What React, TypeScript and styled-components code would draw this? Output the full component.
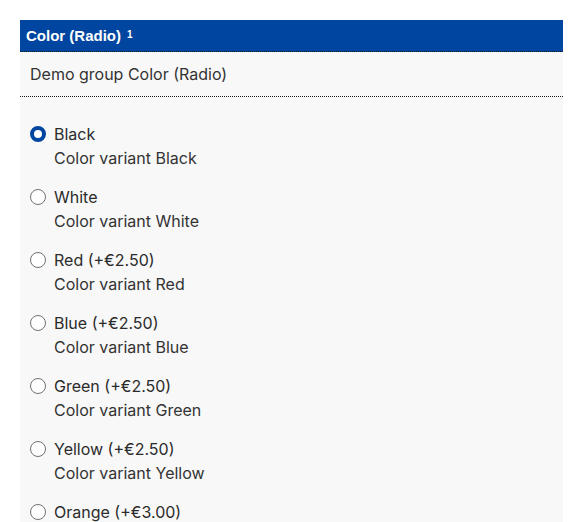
import React from "react";
import styled, { createGlobalStyle } from "styled-components";

const Global = createGlobalStyle`
  html, body { margin: 0; padding: 0; background: #ffffff; }
  body { font-family: Inter, "Noto Sans", sans-serif; color: #2b2b2b; }
  * { box-sizing: border-box; }
`;

const Page = styled.div`
  padding: 20px 20px 0 20px;
  width: 583px;
`;

const Group = styled.section`
  width: 543px;
  display: flex;
  flex-direction: column;
`;

const Header = styled.div`
  background: #0046a0;
  color: #ffffff;
  height: 32px;
  padding: 0 6px;
  display: flex;
  align-items: center;
  font-family: "Liberation Sans", Arial, sans-serif;
  font-weight: 700;
  font-size: 15px;
  border-bottom: 1px dotted #1a1a1a;
`;

const Sup = styled.sup`
  font-size: 10px;
  margin-left: 6px;
  position: relative;
  top: -1px;
`;

const Description = styled.div`
  background: #f8f8f8;
  height: 45px;
  padding: 0 10px;
  display: flex;
  align-items: center;
  font-size: 16px;
  color: #333333;
  border-bottom: 1px dotted #1a1a1a;
`;

const List = styled.div`
  background: #f8f8f8;
  padding: 25px 10px 20px 10px;
  display: flex;
  flex-direction: column;
  gap: 15px;
`;

const Option = styled.label`
  display: grid;
  grid-template-columns: 16px 1fr;
  column-gap: 8px;
  align-items: center;
  font-size: 16px;
  line-height: 24px;
  color: #2b2b2b;
`;

const Radio = styled.span<{ $checked?: boolean }>`
  width: 16px;
  height: 16px;
  border-radius: 50%;
  background: #ffffff;
  border: ${(p) => (p.$checked ? "4px solid #0046a0" : "1px solid #707070")};
`;

const Label = styled.span``;

const Sub = styled.span`
  grid-column: 2;
  color: #333333;
`;

const options = [
  { label: "Black", sub: "Color variant Black", checked: true },
  { label: "White", sub: "Color variant White" },
  { label: "Red (+€2.50)", sub: "Color variant Red" },
  { label: "Blue (+€2.50)", sub: "Color variant Blue" },
  { label: "Green (+€2.50)", sub: "Color variant Green" },
  { label: "Yellow (+€2.50)", sub: "Color variant Yellow" },
  { label: "Orange (+€3.00)", sub: "Color variant Orange" },
];

export default function App() {
  return (
    <>
      <Global />
      <Page>
        <Group>
          <Header>
            Color (Radio)<Sup>1</Sup>
          </Header>
          <Description>Demo group Color (Radio)</Description>
          <List>
            {options.map((o) => (
              <Option key={o.label}>
                <Radio $checked={o.checked} />
                <Label>{o.label}</Label>
                <Sub>{o.sub}</Sub>
              </Option>
            ))}
          </List>
        </Group>
      </Page>
    </>
  );
}
